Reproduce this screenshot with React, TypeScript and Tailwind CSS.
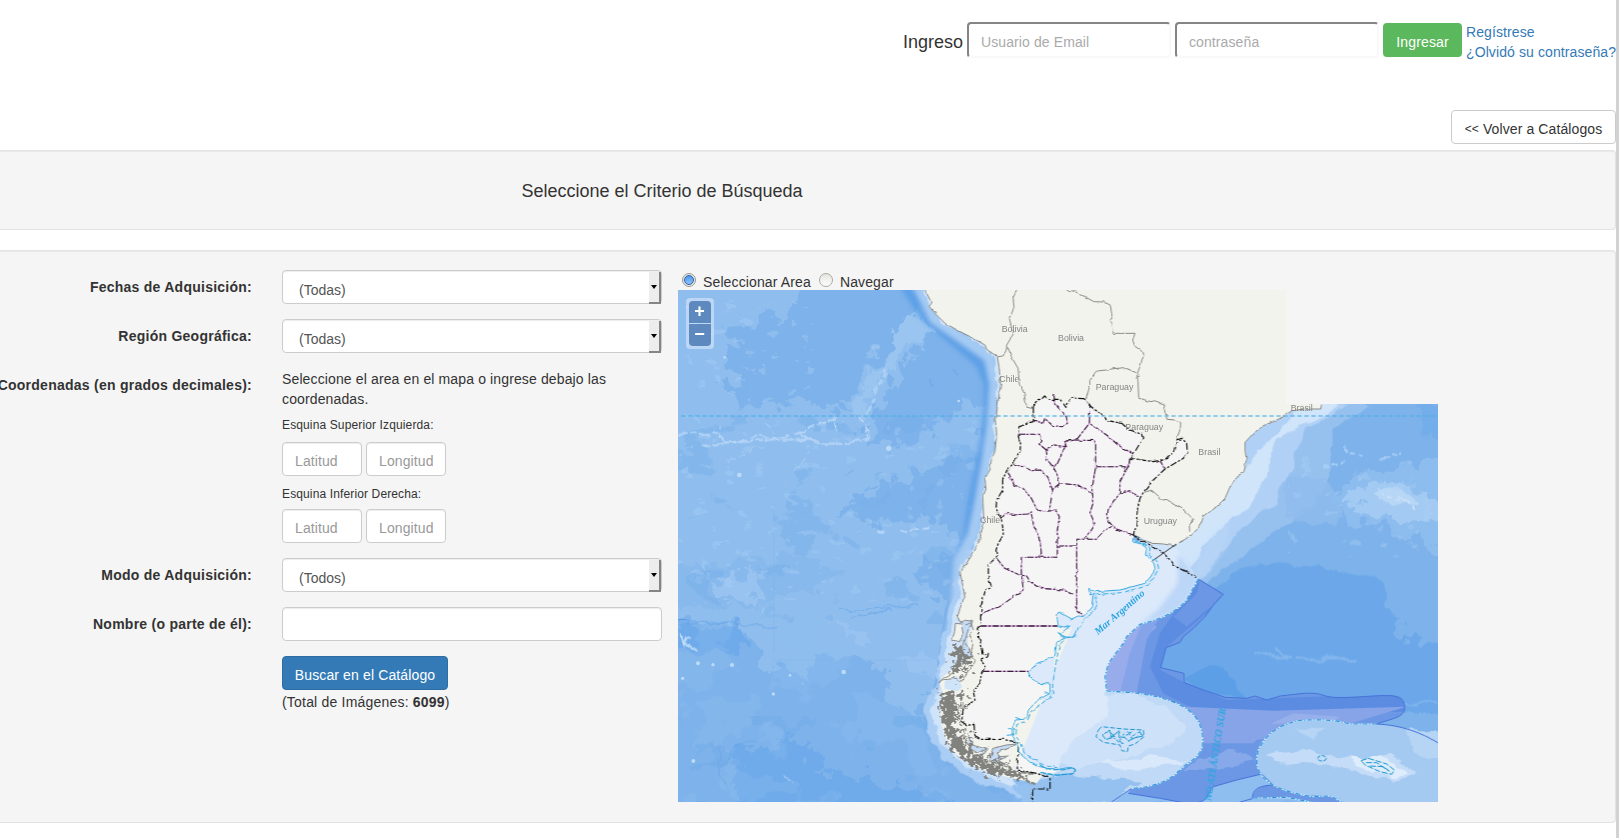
import React from "react";

const PACIFIC =
  "M741 0 759 35 754 50 776 75 801 100 841 122 886 145 921 165 926 178 958 200 963 230 968 285 961 330 956 370 951 380 956 430 951 485 941 505 936 540 921 565 924 600 914 615 918 700 906 740 888 785 866 820 846 845 851 870 861 920 846 955 838 985 856 1000";
const FJORDS =
  " 886 1005 868 1040 871 1070 881 1095 861 1120 831 1130 790 1165 785 1180 795 1210 785 1240 790 1300 800 1340 830 1390 870 1420 930 1445 1000 1465 1076 1480";
const BRAZIL =
  "M1931 342 1928 357 1886 357 1841 362 1816 380 1786 395 1756 407 1726 430 1701 457 1701 480 1705 510 1698 545 1676 560 1656 590 1641 625 1616 650 1576 680 1561 715 1526 745 1486 767 1456 762 1426 760 1386 748 1371 735";
const ANDES =
  "M1066 350 1066 395 1045 400 1026 410 1021 440 1028 462 1026 485 1006 520 986 542 974 570 974 600 956 630 954 655 969 685 974 710 976 735 961 760 954 780 956 800 931 825 931 865 941 890 921 905 911 940 908 975 908 1008 898 1015 901 1035 911 1065 916 1095 931 1090 929 1100 905 1108 924 1130 911 1150 906 1180 886 1205 891 1230 856 1255 851 1295 868 1306 888 1303 891 1340 906 1348 976 1348 1021 1358 1018 1440 1076 1450 1116 1465 1116 1497 1064 1497 1064 1536";
const NORTH =
  "M1066 350 1080 330 1092 326 1100 318 1111 328 1146 328 1164 352 1178 324 1218 326 1233 345 1271 375 1291 392 1331 400 1356 420 1391 433 1394 445 1371 485 1358 505 1426 515 1461 508 1491 480 1496 450 1511 445 1526 460 1528 490 1516 505 1461 537 1426 570 1396 607 1386 625 1378 660 1374 710 1366 735 1386 753 1420 766 1455 788 1495 830 1560 865";
const ARGENTINA =
  "M1066 350 1080 330 1092 326 1100 318 1111 328 1146 328 1164 352 1178 324 1218 326 1233 345 1271 375 1291 392 1331 400 1356 420 1391 433 1394 445 1371 485 1358 505 1426 515 1461 508 1491 480 1496 450 1511 445 1526 460 1528 490 1516 505 1461 537 1426 570 1396 607 1386 625 1378 660 1374 710 1366 735 1364 755 1406 775 1404 800 1426 815 1431 835 1401 880 1326 900 1251 905 1236 898 1241 950 1216 980 1181 985 1138 965 1141 1010 1161 1040 1136 1060 1131 1100 1076 1120 1051 1148 1081 1180 1116 1185 1116 1210 1051 1260 1036 1285 1006 1305 1006 1340 1021 1360 1036 1400 1086 1430 1146 1440 1116 1456 1076 1450 1018 1440 1021 1358 976 1348 906 1348 891 1340 888 1303 868 1306 851 1295 856 1255 891 1230 886 1205 906 1180 911 1150 924 1130 905 1108 929 1100 931 1090 916 1095 911 1065 901 1035 898 1015 908 1008 908 975 911 940 921 905 941 890 931 865 931 825 956 800 954 780 961 760 976 735 974 710 969 685 954 655 956 630 974 600 974 570 986 542 1006 520 1026 485 1028 462 1021 440 1026 410 1045 400 1066 395Z";
const COAST =
  "M1366 740 1364 755 1390 762 1406 775 1402 795 1426 815 1431 835 1420 858 1401 880 1326 900 1251 905 1232 895 1236 915 1247 910 1241 950 1216 980 1200 978 1181 987 1160 975 1141 964 1137 980 1141 1010 1158 1014 1176 1008 1146 1032 1161 1040 1136 1060 1130 1098 1100 1112 1076 1120 1051 1148 1060 1165 1081 1180 1116 1182 1116 1210 1080 1230 1051 1260 1047 1282 1036 1288 1012 1290 1004 1310 1002 1340 1018 1360 1022 1388 1050 1412 1086 1430 1130 1440 1175 1432 1192 1438 1186 1450 1140 1456 1085 1450";
const COAST_SHELF =
  "M1372 752 1416 772 1414 796 1436 812 1442 835 1425 868 1408 888 1330 908 1254 914 1256 948 1240 970 1202 1010 1190 1040 1160 1044 1144 1068 1132 1130 1124 1180 1124 1214 1060 1266 1048 1292 1016 1304 1014 1340 1030 1360 1038 1388 1090 1422 1140 1434";
const FALKLAND = "M200 453 265 457C330 463 380 475 420 495S487 545 488 600 450 658 420 690 340 742 275 745";
const GEORGIA =
  "M1010 552H930C900 544 880 538 800 540S650 600 650 660 710 755 820 770L870 768 910 788";
const PURPLE =
  "M475 117 550 163 520 195 495 230 460 265 430 290 420 307 378 323 362 383 432 400 433 428 490 450 555 472 620 475 645 468 680 480 720 468C790 460 820 455 850 466S930 472 1000 468 1090 467 1094 500 1050 537 1010 552L930 552C900 544 880 538 800 540S650 600 650 650L665 702 590 720 520 740C505 755 505 785 470 788H430L360 775 265 760 275 745C330 742 390 715 420 690S488 660 488 600 460 515 420 495 330 463 265 457L200 453 195 410 205 370 250 310 260 290 300 253C350 240 400 225 440 180Z";

const PROVINCES = [
  "M1021 433H1085L1092 450 1083 462 1105 480 1128 465 1165 470 1160 455 1192 450",
  "M1105 480 1108 510 1125 530 1136 525 1150 495 1161 470 1165 452 1195 450 1234 400",
  "M1006 522 1040 532 1060 542 1088 540 1110 565 1124 600 1115 655 1110 665",
  "M990 545 1008 585 1035 595 1060 625 1075 655 1085 662 1135 663 1144 680 1138 720 1138 802",
  "M969 685 985 670 1015 674 1050 672 1062 665M1060 672 1068 710 1080 735 1087 760 1090 790 1080 802",
  "M1192 450 1253 452V530L1240 610 1245 640 1236 668 1250 700 1220 748M1253 530H1352L1356 500",
  "M1236 345 1234 400 1290 438 1320 465 1365 492",
  "M1128 316 1130 342 1165 378 1168 400 1155 410 1125 408 1100 385 1095 400 1066 390",
  "M1125 530 1136 550 1145 580 1200 585 1240 610M1145 580 1122 600",
  "M1350 530 1326 575 1325 610 1290 660 1288 690 1310 715 1366 735M1325 610 1355 602 1382 620",
  "M1138 768H1196V748H1255L1280 722 1300 710M1196 748V963L1216 978",
  "M956 805 980 835 1025 855 1046 858 1056 875 1090 895 1155 900 1185 912",
  "M1138 802H1030V850L1036 900 1000 925 965 950 940 958 908 973",
  "M1445 508 1458 535",
];
const PARALLELS = "M908 1008H1138M916 1144H1051";

const COUNTRIES = [
  "M1016 0 1005 20 1008 55 994 85 1000 110 1010 125 986 165 985 180 975 198 958 200",
  "M988 172 1000 200 1020 235 1024 280 1038 310 1046 352 1065 355",
  "M1165 0 1190 4 1220 20 1248 35 1280 36 1297 46 1303 85 1293 90 1303 100 1306 130 1371 130 1364 150 1370 168 1385 175 1397 195 1388 225 1378 250 1384 258 1376 262",
  "M1224 328 1236 285 1235 272 1254 244 1300 237 1335 233 1360 240 1376 250 1380 275 1382 325 1420 335 1430 332 1455 342 1462 370 1467 388 1495 390 1508 398 1507 415 1496 450",
  "M1399 607 1420 600 1455 630 1465 628 1510 655 1530 672 1548 690 1534 705 1535 725",
];

function Turb({ id, f, o, s, c, k, b }: { id: string; f: string; o: number; s: number; c: [number, number, number]; k: number; b: number }) {
  return (
    <filter id={id} x="0" y="0" width="100%" height="100%" colorInterpolationFilters="sRGB">
      <feTurbulence type="fractalNoise" baseFrequency={f} numOctaves={o} seed={s} />
      <feColorMatrix values={`0 0 0 0 ${c[0]} 0 0 0 0 ${c[1]} 0 0 0 0 ${c[2]} ${k} 0 0 0 ${b}`} />
    </filter>
  );
}

function SouthAmericaMap() {
  return (
    <svg className="block h-[512px] w-[760px]" viewBox="0 0 2280 1536" fill="none">
      <defs>
        <Turb id="light" f=".006 .0065" o={6} s={7} c={[0.57, 0.755, 0.945]} k={30} b={-16} />
        <Turb id="dark" f=".007 .009" o={6} s={21} c={[0.44, 0.67, 0.915]} k={30} b={-18.6} />
        <Turb id="flecks" f=".022 .035" o={4} s={4} c={[0.68, 0.82, 0.97]} k={20} b={-13.4} />
        <filter id="rough" x="-5%" y="-5%" width="110%" height="110%">
          <feTurbulence type="fractalNoise" baseFrequency=".018" numOctaves={4} seed={3} />
          <feDisplacementMap in="SourceGraphic" scale={34} xChannelSelector="R" yChannelSelector="G" />
        </filter>
        <filter id="ragged" x="-10%" y="-10%" width="120%" height="120%" colorInterpolationFilters="sRGB">
          <feTurbulence type="fractalNoise" baseFrequency=".02" numOctaves={5} seed={5} />
          <feDisplacementMap in="SourceGraphic" scale={110} xChannelSelector="R" yChannelSelector="G" />
        </filter>
        <filter id="jag" x="-20%" y="-20%" width="140%" height="140%" colorInterpolationFilters="sRGB">
          <feTurbulence type="fractalNoise" baseFrequency=".07" numOctaves={3} seed={9} />
          <feDisplacementMap in="SourceGraphic" scale={75} xChannelSelector="R" yChannelSelector="G" />
        </filter>
        <filter id="fine" x="-5%" y="-5%" width="110%" height="110%" colorInterpolationFilters="sRGB">
          <feTurbulence type="fractalNoise" baseFrequency=".06" numOctaves={1} seed={8} />
          <feDisplacementMap in="SourceGraphic" scale={11} xChannelSelector="R" yChannelSelector="G" />
        </filter>
        <filter id="soft" x="-10%" y="-10%" width="120%" height="120%">
          <feGaussianBlur stdDeviation="6" />
        </filter>
        <clipPath id="pacific">
          <path d="M0 0H690L790 100 900 190 935 270 930 400 900 600 870 760 800 960 770 1180 740 1280 770 1370 900 1460 1060 1536H0Z" />
        </clipPath>
        <clipPath id="purple"><path d={PURPLE} /></clipPath>
      </defs>

      {/* Pacific basin */}
      <rect width="2280" height="1536" fill="#7eb2ea" />
      <g clipPath="url(#pacific)">
        <g filter="url(#ragged)">
          <path d="M-60 -60H430L330 60 170 110 140 200 180 260 120 290 200 350 420 340 500 360 560 250 660 130 740 100 730 160 640 290 580 400 560 460 700 480 830 350 940 350 900 500 760 520 600 600 500 650 560 700 780 690 840 760 700 850 850 960 800 1100 760 1200 720 1280 640 1240 610 1130 430 1080 380 1150 260 1130 240 1040 120 990 -60 980Z" fill="#8ebdee" />
          <path d="M-60 820 60 840 300 790 500 840 420 900 200 960 -60 940Z" fill="#88b9ec" />
          <path d="M180 1380 300 1350 420 1360 400 1440 620 1480 900 1560H150ZM-60 1010 200 1020 220 1070 60 1090Z" fill="#6faaea" />
          <path d="M680 80 735 60 745 120 650 230 590 300 545 390 500 380 580 260Z" fill="#9ac5f1" />
          <path d="M60 850 240 860 260 940 150 950ZM440 980 560 1010 580 1080ZM620 1110 780 1100 760 1160Z" fill="#98c3f1" />
        </g>
        <rect y="380" width="1060" height="620" filter="url(#dark)" opacity=".35" />
        <rect y="960" width="1060" height="576" filter="url(#light)" opacity=".28" />
        <rect y="1280" width="1060" height="256" filter="url(#dark)" opacity=".5" />
        <rect y="30" width="420" height="900" filter="url(#flecks)" opacity=".35" />
        <rect x="420" y="380" width="500" height="560" filter="url(#flecks)" opacity=".3" />
        <g filter="url(#rough)" stroke="#bddaf7" strokeLinecap="round">
          <path d="M0 440 60 436 120 432 150 460 240 440 300 445 360 430 400 450" strokeWidth="6" strokeDasharray="30 12 12 10" opacity=".8" />
          <path d="M70 462 200 455 280 452 400 445M400 450 450 468 520 458 570 445 560 420" strokeWidth="7" strokeDasharray="22 11 40 9" opacity=".8" />
          <path d="M360 430 400 408 450 395 480 385M470 400 478 425M540 380 560 410 575 440" strokeWidth="5" strokeDasharray="22 12" />
          <path d="M625 245 590 310 570 380" strokeWidth="11" strokeDasharray="12 18" opacity=".6" />
          <path d="M160 510 240 470M350 540 390 490M270 400 290 430M130 400 125 440" strokeWidth="5" strokeDasharray="14 16" opacity=".5" />
          <path d="M600 725 630 725M670 722 745 712" strokeWidth="6" strokeDasharray="18 14" />
          <path d="M10 1040 50 1075M20 1055 35 1040" strokeWidth="7" />
          <path d="M320 1460 345 1480" strokeWidth="3" />
        </g>
        <g filter="url(#rough)" stroke="#6aa7e8" strokeWidth="4" opacity=".6">
          <path d="M120 1440 170 1370 230 1350M120 1380V1460L150 1490M480 965 600 955 720 945M520 980 640 960M0 990 60 1000 180 1000 300 1015M820 240 840 265M760 265 770 290M500 560 520 540M560 600 600 590" />
        </g>
        <g fill="#bbdaf8">
          <circle cx="60" cy="1120" r="6" /><circle cx="105" cy="1124" r="5" /><circle cx="162" cy="1125" r="6" />
          <circle cx="286" cy="1212" r="5" /><circle cx="497" cy="1146" r="7" /><circle cx="46" cy="1413" r="6" />
          <circle cx="14" cy="1165" r="5" /><circle cx="632" cy="475" r="8" /><circle cx="336" cy="1156" r="4" />
          <circle cx="184" cy="555" r="7" /><circle cx="140" cy="202" r="4" /><circle cx="842" cy="333" r="4" />
        </g>
      </g>
      <path d="M0 989H24" stroke="#4f98e4" strokeWidth="3" />
      <path d="M288 640V1090M288 1110H760" stroke="#6ca8e8" strokeWidth="2" opacity=".3" />

      {/* trench and Chilean shelf */}
      <g filter="url(#soft)" strokeLinejoin="round">
        <path d="M676 -20 736 75 836 160 906 220 931 280 931 340 921 450 896 570 881 650 870 740 845 790" stroke="#559ce6" strokeWidth="28" opacity=".8" />
        <path d="M725 -10 770 85 870 155 935 200 952 280 945 400 928 520 905 650 885 740 845 810 835 950 810 1080" stroke="#a4caf3" strokeWidth="34" />
      </g>
      <path d="M860 780 815 930 785 1080 775 1190 738 1260 756 1340 800 1415 920 1480 1060 1536H1400V760Z" fill="#a9cdf4" filter="url(#rough)" />
      <path d="M741 0 759 50 801 100 920 170 955 220 960 330 945 480 915 600 905 740 846 840 845 900 815 1010 800 1110 780 1200 760 1270 785 1360 860 1430 1000 1490 1120 1536H1300V700L1000 200 760 0Z" fill="#cfe3f9" filter="url(#rough)" />

      {/* Atlantic basin */}
      <path d="M1931 342H2280V1536H1120L1116 1440 1040 1300 1150 1050 1360 730 1480 767Z" fill="#7eb2ea" />
      <g filter="url(#rough)">
        <path d="M1920 300 2080 342 1960 420 1960 560 1920 640 1830 700 1740 760 1620 850 1500 1000H1300V850L1700 400Z" fill="#96c1ef" />
        <path d="M1920 300 2010 345 1920 400 1880 420 1840 540 1780 650 1680 730 1620 800 1520 960 1300 1050V850L1700 400Z" fill="#b0d0f5" />
        <path d="M1900 320 1985 342 1940 370 1870 410 1800 450 1775 510 1765 570 1720 640 1650 690 1570 780 1510 900 1300 1100V800L1600 640Z" fill="#d0e5fa" />
        <path d="M1830 560 1950 570 2000 660 1960 710 1820 680Z" fill="#8ebcee" opacity=".8" />
      </g>
      <g filter="url(#ragged)">
        <path d="M1990 680 1970 600 2050 540 2200 530 2300 500V780H2250L2180 730Z" fill="#8dbcee" />
        <path d="M2200 340H2300V440L2240 440Z" fill="#70abea" opacity=".8" />
        <path d="M1990 630 2060 580 2160 580 2290 650V690L2150 690 2070 670Z" fill="#a3caf2" />
      </g>
      <g filter="url(#rough)">
        <path d="M2080 600 2160 590 2220 640 2150 650 2100 635Z" fill="#b8d7f6" />
        <path d="M2100 590 2120 620 2180 640M2160 620 2210 660" stroke="#cde3fa" strokeWidth="5" strokeDasharray="14 8" />
        <path d="M2000 470 2025 490 2055 495M1935 530 2000 522M2110 510 2170 490" stroke="#a5cdf5" strokeWidth="7" strokeDasharray="20 8" />
        <path d="M1620 890 1680 840 1790 815 1900 830 2050 850 2120 880 2150 980 2290 1070V1270H2150L1450 1230 1400 1050Z" fill="#6ca8e9" />
        <path d="M1515 1170 1590 1120 1650 1145 1700 1220 1560 1215Z" fill="#5b9fe6" />
        <path d="M1720 1080 1840 1105M1850 1108 2040 1108M1790 1070 1830 1100M2170 1242H2280" stroke="#82b6ed" strokeWidth="7" />
      </g>
      <g filter="url(#ragged)" fill="#7eb2ea"><circle cx="2140" cy="950" r="22" /><circle cx="2180" cy="1010" r="28" /><circle cx="2230" cy="1040" r="24" /><circle cx="2190" cy="920" r="24" /></g>
      <rect x="1830" y="500" width="450" height="300" filter="url(#flecks)" opacity=".35" />
      <path d="M1364 750 1500 780 1561 867 1530 925 1486 970 1386 1003 1336 1060 1291 1120 1286 1203 1300 1420 1180 1440 1100 1460 1000 1400V1280L1100 1000Z" fill="#dbe9fb" />
      <path d="M1500 790 1561 867 1530 925 1486 970 1386 1003 1440 960 1500 880Z" fill="#b4d2f6" filter="url(#soft)" opacity=".8" />
      <path d="M1600 740 1660 690 1640 780 1580 860 1561 867 1540 840Z" fill="#b9d6f6" filter="url(#soft)" opacity=".6" />

      <g transform="translate(1086 750)">
        <path d="M-120 620 100 690 275 650 500 600 680 690 900 650 1200 620V790H-50Z" fill="#8ebdf0" filter="url(#rough)" />
        <path d={PURPLE} fill="#6b97e4" />
        <g clipPath="url(#purple)">
          <path d="M190 460V360L310 240 350 260 270 340 250 460Z" fill="#98aceb" />
          <path d="M310 240 360 230 320 300 290 460H240L270 340Z" fill="#84a3e8" />
          <path d="M480 110 570 160 380 320 360 390 440 430 560 480 1110 460V515H480L370 460 330 380 360 280Z" fill="#5b8ce1" />
          <path d="M480 110 570 160 500 210 440 260 400 230 470 160Z" fill="#6b97e4" />
          <path d="M440 500 700 512 1100 500 900 560 650 600 640 610H480Z" fill="#86a4e7" />
          <path d="M690 552 760 520 900 530 880 545Z" fill="#97afea" />
          <path d="M420 690 490 650 600 630 640 660 520 690Z" fill="#87a9e9" filter="url(#rough)" />
        </g>
        <path d={FALKLAND + "L220 788 30 770 -60 690 0 600Z"} fill="#bfd9f6" />
        <g filter="url(#rough)">
          <path d="M60 470 290 465 380 500 440 560 400 610 300 640 100 690 20 660Z" fill="#cde1f8" />
          <path d="M-20 440 190 450 210 520 100 600 50 680 -60 670Z" fill="#dbe9fb" />
          <path d="M170 665 350 650 440 665 250 695Z" fill="#d9e9fb" />
          <path d="M-90 740 60 700 200 715 300 725 220 790H-40Z" fill="#94c1f0" />
        </g>
        <path d="M1010 552H930C900 544 880 538 800 540S650 600 650 660 710 755 820 770L870 768 910 788H1200V612C1130 570 1070 555 1010 552Z" fill="#a5caf2" />
        <g filter="url(#rough)">
          <path d="M670 640 800 630 950 660 1050 645 1130 700 1060 725 900 680 700 665Z" fill="#c4dcf7" />
          <path d="M920 650 1010 645 1110 700 1060 715 960 680Z" fill="#deedfc" />
          <path d="M760 560 860 570 820 600ZM1100 560 1200 590V660L1120 640Z" fill="#b6d5f5" />
        </g>
        <path d="M637 775C640 745 670 735 700 735L780 765 870 768 910 788H820L740 772Z" fill="#6b97e4" />
        <g stroke="#4573d9" strokeWidth="3">
          <path d="M475 117 550 163 520 195 495 230 460 265 430 290 420 307 378 323 362 383 432 400 433 428 490 450 555 472 620 475 645 468 680 480 720 468C790 460 820 455 850 466S930 472 1000 468 1090 467 1094 500 1050 537 1010 552C1080 555 1140 575 1200 612" />
          <path d="M665 702 590 720 520 740C505 755 505 785 470 788M265 760 360 775 430 788M275 745 215 786M665 702 700 735C660 737 637 745 637 775M600 786 637 776" />
        </g>
        <g stroke="#e5f4ff" strokeWidth="3.5">
          <path d={FALKLAND} /><path d={GEORGIA} />
          <path d="M475 117 440 180C400 225 350 240 300 253L260 290 250 310 205 370 195 410 200 453M640 774 740 772 820 788" />
        </g>
        <g stroke="#2a94dc" strokeWidth="3.5" strokeDasharray="14 5 4 5">
          <path d={FALKLAND} /><path d={GEORGIA} />
          <path d="M475 117 440 180C400 225 350 240 300 253L260 290 250 310 205 370 195 410 200 453M640 774 740 772 820 788" />
        </g>
      </g>

      {/* land masses */}
      <path d={"M741 -9" + PACIFIC.slice(6).replace(/^/, " 741 0") + FJORDS + "L1100 1450 1300 720 1371 735 1426 760 1456 762 1486 767 1526 745 1561 715 1576 680 1616 650 1641 625 1656 590 1676 560 1698 545 1705 510 1701 457 1726 430 1756 407 1786 395 1816 380 1841 362 1886 357 1928 357 1931 336 1840 336V-9Z"} fill="#f2f3ed" />
      <path d="M1010 1440 1300 720 1371 735 1364 755 1420 850 1300 1100 1150 1400 1140 1440 1100 1452Z" fill="#dbe9fb" />
      <path d={ARGENTINA} fill="#f5f5f5" />
      <path d="M1138 965 1160 975 1181 985 1216 980 1190 1010 1146 1015ZM1131 1095 1076 1120 1051 1148 1081 1180 1124 1182Z" fill="#dbe9fb" />
      <path d="M1371 735 1426 760 1486 767 1455 790 1410 770Z" fill="#cfe3f9" />
      <path d="M845 1000 862 990 884 995 870 1020 860 1055 885 1100 862 1105 850 1090 858 1050 842 1058Z" fill="#c5dcf8" stroke="#8a8a85" strokeWidth="3" filter="url(#fine)" />
      <path d="M800 1172 838 1158 852 1190 838 1204 800 1196Z" fill="#cfe3f9" />
      <g stroke="#8a8a85" strokeWidth="3" strokeLinejoin="round" filter="url(#fine)">
        <path d={PACIFIC} /><path d={BRAZIL} />
        {COUNTRIES.map((d) => <path key={d} d={d} />)}
      </g>
      <g stroke="#8a8a85" strokeWidth="3" filter="url(#fine)">
        <path d="M862 1005 880 998 886 1020 872 1035 885 1060 878 1095 892 1115 872 1140 850 1175 835 1165 790 1170 782 1180 795 1165 830 1145" />
        <path d="M832 1000 850 1002 855 1030 845 1055 822 1050 830 1025Z" fill="#f2f3ed" />
        <path d="M870 1330 885 1365 925 1378 900 1390 875 1375M900 1400 925 1385 932 1370M935 1415 945 1375 985 1365 1015 1362 985 1378 958 1385 965 1400 992 1398 960 1412 982 1422 948 1418Z" fill="#c5dcf6" />
      </g>
      <g filter="url(#jag)" fill="#81817d">
        <path d="M824 1072 850 1068 856 1100 876 1110 850 1130 842 1150 820 1156 828 1110ZM786 1212 816 1205 846 1212 830 1240 838 1270 826 1300 840 1330 870 1372 896 1400 950 1425 1000 1436 1050 1458 1000 1462 920 1446 870 1420 830 1386 806 1340 800 1320 790 1280Z" />
        <path d="M862 1100 880 1090M850 1150 880 1130M846 1215 870 1225M838 1270 850 1290M850 1330 880 1350M910 1400 990 1425" stroke="#81817d" strokeWidth="10" />
      </g>
      <path d="M1006 1454 1035 1462 1052 1476 1072 1482M1030 1446 1070 1452" stroke="#85857f" strokeWidth="7" strokeDasharray="16 4" filter="url(#fine)" />

      {/* political limits */}
      <g strokeLinejoin="round" filter="url(#fine)">
        <g stroke="#d49adf" strokeWidth="3.2">{PROVINCES.map((d) => <path key={d} d={d} />)}</g>
        <g stroke="#382238" strokeWidth="3.2" strokeDasharray="18 6 6 6">{PROVINCES.map((d) => <path key={d} d={d} />)}</g>
        <g stroke="#111" strokeWidth="3.6" strokeDasharray="20 5 7 5"><path d={ANDES} /><path d={NORTH} /></g>
      </g>
      <path d={PARALLELS} stroke="#d49adf" strokeWidth="4" />
      <path d={PARALLELS} stroke="#382238" strokeWidth="4" strokeDasharray="18 6 6 6" />
      <path d="M1424 812 1495 762" stroke="#333" strokeWidth="3" />
      <g stroke="#38abe2" strokeWidth="3" filter="url(#fine)">
        <path d={COAST} />
        <path d={COAST_SHELF} strokeDasharray="16 6" />
        <path d="M1012 1282 1028 1288M990 1312 1010 1322M986 1336 1006 1334M1100 1205 1116 1212M1142 1024 1150 1040 1185 1042 1196 1020" />
      </g>

      {/* islands */}
      <g transform="translate(1086 750)" stroke="#1d95d0" strokeWidth="3">
        <path d="M175 570 185 560 250 567 310 570 312 590 285 612 265 618 262 635 245 632 240 615 190 607 168 590Z" strokeDasharray="14 6" />
        <g filter="url(#fine)"><path d="M190 585 205 570 215 590 235 575 240 592 262 574 275 590 300 575 305 588 280 596 262 604 250 590 235 605 220 592 200 598ZM205 572 225 590M258 590 275 572M240 600 250 612" /></g>
        <path d="M963 662 985 655 1040 672 1063 690 1055 703 1020 695 975 675ZM978 668 1010 668 1045 692M990 678 1030 680 1050 695" strokeDasharray="18 5" />
        <ellipse cx="846" cy="655" rx="13" ry="8" strokeDasharray="12 4" />
        <path d="M0 675 20 686 70 690 100 682 107 692 98 702 50 705 5 698" strokeDasharray="16 5" />
      </g>

      <path d="M10 378H2280" stroke="#4eb0e8" strokeWidth="5" strokeDasharray="13 8" opacity=".8" />
      <rect x="1824" y="-9" width="465" height="351" fill="#f5f5f5" />

      <g fontFamily="Liberation Sans, sans-serif" fontSize="26.5" fill="#858585">
        <text x="971" y="125">Bolivia</text><text x="1140" y="152">Bolivia</text>
        <text x="964" y="275">Chile</text><text x="906" y="698">Chile</text><text x="812" y="1257">Chile</text>
        <text x="1253" y="300">Paraguay</text><text x="1342" y="420">Paraguay</text>
        <text x="1561" y="495">Brasil</text><text x="1838" y="363">Brasil</text>
        <text x="1397" y="701">Uruguay</text>
      </g>
      <g fontFamily="Liberation Serif, serif" fontStyle="italic" fill="#2ea5e0">
        <text transform="translate(1260 1036) rotate(-41)" fontSize="31" fontWeight="700" textLength="188">Mar Argentino</text>
        <text transform="translate(1600 1534) rotate(-81)" fontSize="30" fontWeight="700" textLength="282">NO ATLÁNTICO SUR</text>
      </g>
    </svg>
  );
}

const field = "h-[34px] rounded border border-[#ccc] bg-white px-3 pt-[3px] text-sm text-[#555] shadow-[inset_0_1px_1px_rgba(0,0,0,0.075)] outline-none placeholder:text-[#999]";
const panel = "rounded-r border-y border-r border-[#e3e3e3] bg-[#f5f5f5] shadow-[inset_0_1px_1px_rgba(0,0,0,0.05)]";

function Select({ value }: { value: string }) {
  return (
    <div className="flex h-[34px] w-[380px] justify-between rounded border border-[#ccc] bg-white shadow-[inset_0_1px_1px_rgba(0,0,0,0.075)]">
      <span className="pt-[9px] pl-4 text-sm leading-5 text-[#555]">{value}</span>
      <span className="mt-px flex h-[32px] w-[12px] items-center justify-center border-r-2 border-b-2 border-[#858585] bg-[#ededed]">
        <svg className="h-1 w-1.5" viewBox="0 0 6 4"><path d="M0 0h6L3 4z" fill="#000" /></svg>
      </span>
    </div>
  );
}

function Row({ label, children }: { label: string; children: React.ReactNode }) {
  return (
    <div className="mb-[15px] flex">
      <label className="flex w-[252px] shrink-0 justify-end pt-[7px] font-bold tracking-[0.25px] whitespace-nowrap">{label}</label>
      <div className="ml-[30px] w-[380px]">{children}</div>
    </div>
  );
}

function Corner() {
  return (
    <div className="flex gap-1">
      <input className={`${field} w-20 tracking-[0.1px]`} placeholder="Latitud" />
      <input className={`${field} w-20 tracking-[0.1px]`} placeholder="Longitud" />
    </div>
  );
}

export default function App() {
  return (
    <div className="flex h-[838px] w-[1619px] overflow-hidden bg-white font-['Liberation_Sans',Arial,sans-serif] text-sm leading-5 text-[#333]">
      <main className="w-[1616px]">
        <header className="flex h-[110px] justify-end pt-[22px]">
          <span className="mr-1 pt-[10px] text-lg leading-5">Ingreso</span>
          <input className="h-[36px] w-[204px] rounded border-2 border-t-[#858585] border-r-[#f9f9f9] border-b-[#f9f9f9] border-l-[#858585] px-3 pt-1 tracking-[0.1px] placeholder:text-[#aaa]" placeholder="Usuario de Email" />
          <input className="ml-1 h-[36px] w-[204px] rounded border-2 border-t-[#858585] border-r-[#f9f9f9] border-b-[#f9f9f9] border-l-[#858585] px-3 pt-1 tracking-[0.1px] placeholder:text-[#aaa]" placeholder="contraseña" />
          <button className="mt-px ml-1 h-[34px] w-[79px] rounded bg-[#5cb85c] pt-[3px] tracking-[0.15px] text-white">Ingresar</button>
          <div className="ml-1 flex w-[150px] flex-col tracking-[0.1px] whitespace-nowrap text-[#337ab7]">
            <a>Regístrese</a>
            <a>¿Olvidó su contraseña?</a>
          </div>
        </header>
        <div className="flex h-10 justify-end">
          <button className="flex h-[34px] w-[165px] items-center justify-center gap-1 rounded border border-[#ccc] bg-white pt-[3px] tracking-[0.1px]">
            <span className="text-xs">&lt;&lt;</span>
            <span>Volver a Catálogos</span>
          </button>
        </div>
        <section className={`${panel} h-20 pt-[30px]`}>
          <h1 className="w-[1324px] text-center text-lg leading-5">Seleccione el Criterio de Búsqueda</h1>
        </section>
        <section className={`${panel} mt-5 flex h-[573px] pt-[19px]`}>
          <form className="w-[678px] shrink-0">
            <Row label="Fechas de Adquisición:"><Select value="(Todas)" /></Row>
            <Row label="Región Geográfica:"><Select value="(Todas)" /></Row>
            <Row label="Coordenadas (en grados decimales):">
              <p className="pt-px tracking-[0.13px]">Seleccione el area en el mapa o ingrese debajo las coordenadas.</p>
              <p className="mt-1.5 mb-[7px] text-xs leading-5 tracking-[0.13px]">Esquina Superior Izquierda:</p>
              <Corner />
              <p className="mt-2 mb-[5px] text-xs leading-5 tracking-[0.13px]">Esquina Inferior Derecha:</p>
              <Corner />
            </Row>
            <Row label="Modo de Adquisición:"><Select value="(Todos)" /></Row>
            <Row label="Nombre (o parte de él):"><input className={`${field} block w-[380px]`} /></Row>
            <div className="ml-[282px]">
              <button type="button" className="block h-[34px] w-[166px] rounded border border-[#2e6da4] bg-[#337ab7] pt-[3px] tracking-[0.13px] text-white">Buscar en el Catálogo</button>
              <p className="pt-[2px] tracking-[0.2px]">(Total de Imágenes: <b>6099</b>)</p>
            </div>
          </form>
          <div className="relative w-[760px]">
            <div className="flex h-5 items-start pl-1 tracking-[0.13px]">
              <span className="mt-[3px] flex size-[14px] items-center justify-center rounded-full border border-[#9a9a92] bg-[#e9e9e4]"><span className="size-[10px] rounded-full border border-[#2a62b0] bg-linear-to-b from-[#4f98ea] to-[#8cc4fb]" /></span>
              <span className="ml-[7px] pt-[2px] leading-5">Seleccionar Area</span>
              <span className="mt-[3px] ml-2 size-[14px] rounded-full border border-[#aaaaa4] bg-linear-to-b from-[#e4e4df] to-white" />
              <span className="ml-[7px] pt-[2px] leading-5">Navegar</span>
            </div>
            <SouthAmericaMap />
            <div className="absolute top-7 left-2 flex h-[51px] w-[28px] flex-col gap-px rounded bg-white/40 p-[3px]">
              <button className="flex h-[22px] w-[22px] items-center justify-center rounded-t-sm bg-[#003c88]/50 pr-px pb-0.5 text-lg font-bold text-white">+</button>
              <button className="flex h-[22px] w-[22px] items-center justify-center rounded-b-sm bg-[#003c88]/50 pr-px pb-0.5 text-lg font-bold text-white">−</button>
            </div>
          </div>
        </section>
      </main>
      <div className="w-[3px] bg-[#d2d2d2]" />
    </div>
  );
}
